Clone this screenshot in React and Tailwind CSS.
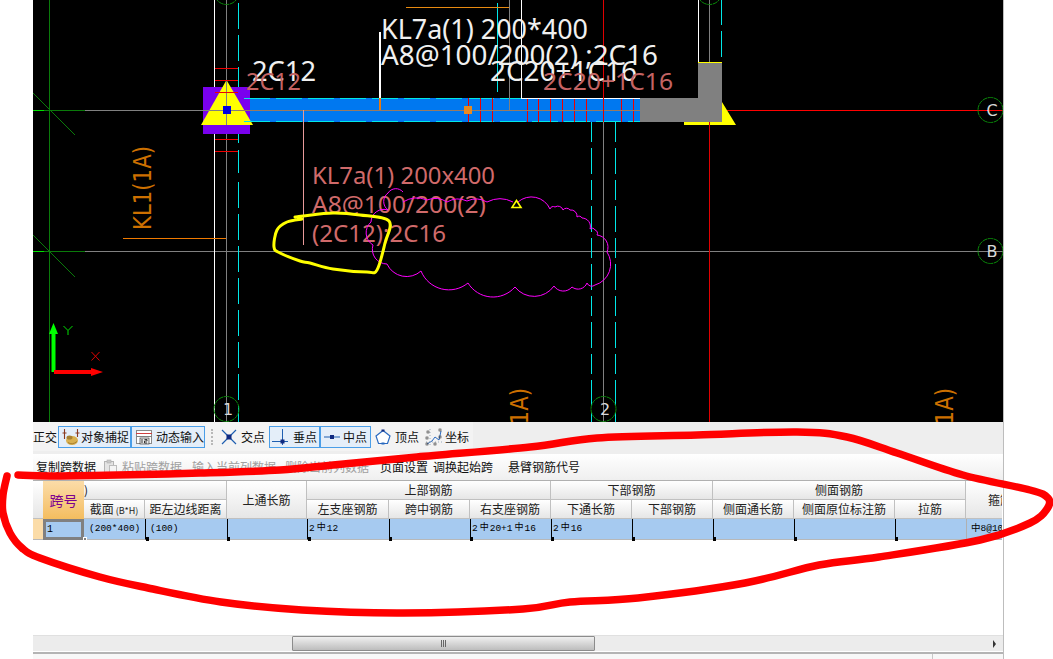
import React from "react";

const CJK = { fontFamily: '"Noto Sans CJK SC", sans-serif' };

function smooth(pts) {
  let d = `M${pts[0][0]} ${pts[0][1]}`;
  for (let i = 0; i < pts.length - 1; i++) {
    const p0 = pts[i - 1] || pts[i];
    const p1 = pts[i];
    const p2 = pts[i + 1];
    const p3 = pts[i + 2] || p2;
    const c1 = [p1[0] + (p2[0] - p0[0]) / 6, p1[1] + (p2[1] - p0[1]) / 6];
    const c2 = [p2[0] - (p3[0] - p1[0]) / 6, p2[1] - (p3[1] - p1[1]) / 6];
    d += ` C${c1[0]} ${c1[1]} ${c2[0]} ${c2[1]} ${p2[0]} ${p2[1]}`;
  }
  return d;
}

function scallop(pts, k = 0.62) {
  let d = `M${pts[0][0]} ${pts[0][1]}`;
  for (let i = 1; i < pts.length; i++) {
    const a = pts[i - 1];
    const b = pts[i];
    const r = Math.hypot(b[0] - a[0], b[1] - a[1]) * k;
    d += ` A${r} ${r} 0 0 1 ${b[0]} ${b[1]}`;
  }
  return d;
}

const redInk = [
  [7, 476], [3, 495], [3, 513], [10, 533], [22, 548], [40, 558], [100, 577], [148, 588], [221, 602], [302, 610],
  [403, 613], [523, 609], [570, 602], [638, 598], [745, 583], [819, 565], [879, 557], [980, 540], [1030, 523],
  [1047, 509], [1048, 498], [1030, 490], [963, 475], [897, 453], [847, 437], [797, 432], [697, 435], [597, 438],
  [530, 447], [417, 457], [333, 465], [280, 470], [200, 473], [117, 475], [50, 476], [18, 475],
];

const yellowInk = [
  [295, 217], [303, 216], [333, 213], [360, 215], [389, 221], [385, 243], [377, 270], [367, 272], [333, 269],
  [310, 263], [300, 261], [280, 253], [274, 247], [277, 230], [287, 222], [302, 219],
];

const cloud1 = [
  [550, 209], [555, 207], [563, 210], [570, 210], [577, 217], [582, 218], [590, 229], [595, 230], [597, 235],
  [607, 252], [595, 285], [587, 283], [572, 287], [554, 286], [515, 287], [468, 283], [421, 271], [387, 264],
  [373, 245], [371, 222], [388, 210], [388, 193], [403, 192],
];
const cloud2 = [[403, 202], [427, 200], [447, 202], [467, 201], [487, 202], [513, 202]];
const cloud3 = [[518, 202], [550, 209]];

const stirrups = [468, 480, 492, 527, 538, 550, 562, 574, 586, 603, 621, 633];

function AxisBubble({ cx, cy, label }) {
  return (
    <g>
      <circle cx={cx} cy={cy} r="12.5" fill="none" stroke="#0a8a0a" strokeDasharray="5 0.6" />
      <text x={cx + 1.5} y={cy + 6} textAnchor="middle" fontSize="16" fill="#d8d8d8" fontFamily="DejaVu Sans, sans-serif">
        {label}
      </text>
    </g>
  );
}

function CadCanvas() {
  const cadFont = "Noto Sans, sans-serif";
  return (
    <svg width="970" height="422" viewBox="33 0 970 422" className="block bg-black shrink-0">
      {/* left grid */}
      <line x1="49.5" y1="0" x2="49.5" y2="422" stroke="#0a7a0a" />
      <line x1="33" y1="93" x2="75" y2="135" stroke="#0a7a0a" />
      <line x1="33" y1="235" x2="75" y2="277" stroke="#0a7a0a" />
      <line x1="33" y1="110.5" x2="44" y2="110.5" stroke="#00e000" />
      <line x1="44" y1="110.5" x2="85" y2="110.5" stroke="#0a7a0a" />
      <line x1="85" y1="110.5" x2="722" y2="110.5" stroke="#808080" />
      <line x1="722" y1="110.5" x2="1003" y2="110.5" stroke="#ff0000" />
      <line x1="33" y1="251.5" x2="44" y2="251.5" stroke="#00e000" />
      <line x1="44" y1="251.5" x2="85" y2="251.5" stroke="#0a7a0a" />
      <line x1="85" y1="251.5" x2="1003" y2="251.5" stroke="#808080" />

      {/* axis 1 */}
      <line x1="214.5" y1="0" x2="214.5" y2="422" stroke="#ffffff" />
      <line x1="226.5" y1="0" x2="226.5" y2="422" stroke="#808080" />
      <line x1="238.5" y1="3" x2="238.5" y2="98" stroke="#00e8e8" strokeDasharray="26 6" />
      <line x1="238.5" y1="122" x2="238.5" y2="422" stroke="#00e8e8" strokeDasharray="21 7 23 9 26 6 26 6 26 6 26 6 26 6 26 6 26 6" />
      {[127, 139, 151].map((y) => (
        <line key={y} x1="215" y1={y + 0.5} x2="238" y2={y + 0.5} stroke="#f00000" />
      ))}

      {/* beam */}
      <rect x="238" y="98" width="402" height="24" fill="#0078f0" />
      <rect x="203" y="87" width="47" height="47" fill="#7a00ee" />
      <polygon points="226.5,80 253,125 201,125" fill="#ffff00" />
      <line x1="226.5" y1="80" x2="226.5" y2="125" stroke="#808080" />
      <line x1="201" y1="110.5" x2="253" y2="110.5" stroke="#808080" />
      <rect x="223" y="106" width="8" height="8" fill="#0000e0" />
      {[68, 80, 92].map((y) => (
        <line key={y} x1="215" y1={y + 0.5} x2="238" y2={y + 0.5} stroke="#f00000" />
      ))}
      <line x1="244" y1="98.5" x2="640" y2="98.5" stroke="#00e8e8" strokeDasharray="26 6" />
      <line x1="244" y1="121.5" x2="640" y2="121.5" stroke="#00e8e8" strokeDasharray="26 6" />
      {stirrups.map((x) => (
        <line key={x} x1={x + 0.5} y1="98" x2={x + 0.5} y2="122" stroke="#f00000" />
      ))}
      <line x1="238" y1="110.5" x2="640" y2="110.5" stroke="#9a7a60" />

      {/* column 2 */}
      <polygon points="722,102 736,125 684,125 722,120" fill="#ffff00" />
      <path d="M640 98H698V62H722V122H640Z" fill="#808080" />
      <line x1="698" y1="62.5" x2="722" y2="62.5" stroke="#ffff00" />
      <rect x="684" y="122" width="38" height="3" fill="#ffff00" />
      <line x1="521.5" y1="0" x2="521.5" y2="98" stroke="#fff" />
      <line x1="521" y1="98.5" x2="640" y2="98.5" stroke="#fff" />
      <line x1="640" y1="98.5" x2="698" y2="98.5" stroke="#808080" />
      <line x1="698.5" y1="0" x2="698.5" y2="62" stroke="#fff" />
      <line x1="709.5" y1="0" x2="709.5" y2="62" stroke="#808080" />
      <line x1="721.5" y1="0" x2="721.5" y2="57" stroke="#00e8e8" strokeDasharray="25 6 26 6" />
      <line x1="709.5" y1="122" x2="709.5" y2="422" stroke="#e00000" />
      <line x1="603.5" y1="0" x2="603.5" y2="122" stroke="#e00000" />
      <line x1="603.5" y1="122" x2="603.5" y2="422" stroke="#808080" />
      <line x1="591.5" y1="122" x2="591.5" y2="422" stroke="#00e8e8" strokeDasharray="20 6 26 6" />
      <line x1="615.5" y1="122" x2="615.5" y2="422" stroke="#00e8e8" strokeDasharray="20 6 26 6" />

      {/* other verticals */}
      <line x1="509.5" y1="0" x2="509.5" y2="110" stroke="#808080" />
      <line x1="497.5" y1="3" x2="497.5" y2="92" stroke="#00e8e8" />
      <line x1="406" y1="7.5" x2="509" y2="7.5" stroke="#e88a10" />
      <line x1="380" y1="32" x2="380" y2="98" stroke="#fff" strokeWidth="2" />
      <line x1="380" y1="98" x2="380" y2="110" stroke="#e87a10" strokeWidth="2" />
      <rect x="464" y="106" width="8" height="8" fill="#e88a20" />
      <line x1="303.5" y1="110" x2="303.5" y2="245" stroke="#e89a9a" />
      <line x1="123" y1="238.5" x2="226" y2="238.5" stroke="#f07a00" />

      {/* texts */}
      <g fontFamily={cadFont}>
        <text x="252" y="81" fontSize="28" fill="#f0f0f0" textLength="64" lengthAdjust="spacingAndGlyphs">2C12</text>
        <text x="246" y="90" fontSize="24" fill="#c46464" textLength="55" lengthAdjust="spacingAndGlyphs">2C12</text>
        <text x="381" y="39" fontSize="28" fill="#f0f0f0" textLength="207" lengthAdjust="spacingAndGlyphs">KL7a(1) 200*400</text>
        <text x="381" y="65" fontSize="28" fill="#f0f0f0" textLength="277" lengthAdjust="spacingAndGlyphs">A8@100/200(2) ;2C16</text>
        <text x="490" y="81" fontSize="28" fill="#f0f0f0" textLength="147" lengthAdjust="spacingAndGlyphs">2C20+1C16</text>
        <text x="543" y="90" fontSize="24" fill="#c46464" textLength="130" lengthAdjust="spacingAndGlyphs">2C20+1C16</text>
        <text x="312" y="184" fontSize="24" fill="#d06a6a" textLength="183" lengthAdjust="spacingAndGlyphs">KL7a(1) 200x400</text>
        <text x="312" y="213" fontSize="24" fill="#d06a6a" textLength="174" lengthAdjust="spacingAndGlyphs">A8@100/200(2)</text>
        <text x="312" y="242" fontSize="24" fill="#d06a6a" textLength="134" lengthAdjust="spacingAndGlyphs">(2C12);2C16</text>
      </g>
      <g fontFamily="DejaVu Sans, sans-serif" fontSize="24" fill="#cc7000">
        <text transform="translate(151 230) rotate(-90)" textLength="84" lengthAdjust="spacingAndGlyphs">KL1(1A)</text>
        <text transform="translate(528 472) rotate(-90)" textLength="84" lengthAdjust="spacingAndGlyphs">KL1(1A)</text>
        <text transform="translate(953 472) rotate(-90)" textLength="84" lengthAdjust="spacingAndGlyphs">KL1(1A)</text>
      </g>

      {/* cloud */}
      <path d={scallop(cloud1)} fill="none" stroke="#ff00ff" />
      <path d={scallop(cloud2, 1.1)} fill="none" stroke="#ff00ff" />
      <path d={scallop(cloud3)} fill="none" stroke="#ff00ff" />
      <polygon points="516.5,200.5 521,207.5 512,207.5" fill="none" stroke="#ffff00" strokeWidth="1.6" />

      {/* bubbles */}
      <AxisBubble cx={226.5} cy={-8} label="" />
      <AxisBubble cx={709.5} cy={-8} label="" />
      <AxisBubble cx={226.5} cy={409} label="1" />
      <AxisBubble cx={603.5} cy={409} label="2" />
      <AxisBubble cx={990.5} cy={110} label="C" />
      <AxisBubble cx={990.5} cy={251} label="B" />

      {/* ucs */}
      <line x1="53.5" y1="372" x2="53.5" y2="332" stroke="#00ff00" strokeWidth="4" />
      <polygon points="53.5,323 58,334 49,334" fill="#00ff00" />
      <line x1="54" y1="372" x2="92" y2="372" stroke="#ff0000" strokeWidth="4" />
      <polygon points="103,372 91,368 91,376" fill="#ff0000" />
      <path d="M63.5 326L68 330.5L72.5 326M68 330.5V335" fill="none" stroke="#00e000" />
      <path d="M91.5 352L99.5 360.5M99.5 352L91.5 360.5" fill="none" stroke="#e00000" />
    </svg>
  );
}

function ToolBtn({ active, children, className = "" }) {
  return (
    <div
      className={`flex items-center shrink-0 h-[22px] whitespace-nowrap ${
        active ? "border border-[#4a9ee8] bg-[#e4eef9]" : ""
      } ${className}`}
    >
      {children}
    </div>
  );
}

function MagnetIcon() {
  return (
    <svg width="18" height="18" viewBox="0 0 18 18" className="shrink-0">
      <path d="M2.5 1V11M15.5 1V9M0.5 5H4.5M13.5 5H17.5" stroke="#8a3a20" strokeWidth="1.1" />
      <ellipse cx="10" cy="12.5" rx="6" ry="4.5" fill="#d8b050" />
      <ellipse cx="7.5" cy="9.5" rx="3" ry="2" fill="#a88030" />
      <path d="M6 14.5Q10 17.5 15 13.5" stroke="#a88030" fill="none" />
    </svg>
  );
}

function InputIcon() {
  return (
    <svg width="18" height="16" viewBox="0 0 18 16" className="shrink-0">
      <rect x="1.5" y="1.5" width="15" height="13" fill="#fff" stroke="#8a8a8a" />
      <path d="M1 4.5H17" stroke="#d04040" />
      <path d="M1 7.5H17" stroke="#808080" />
      <rect x="5" y="9" width="9" height="6" fill="#e8e8e8" stroke="#222" strokeWidth="0.6" />
      <path d="M7 10V14M9.5 10.5H12V12H9.5V14H12" stroke="#111" strokeWidth="0.8" fill="none" />
    </svg>
  );
}

function CrossIcon() {
  return (
    <svg width="16" height="16" viewBox="0 0 16 16" className="shrink-0">
      <path d="M1 1L15 15M15 1L1 15" stroke="#1f5fb0" strokeWidth="1.2" />
      <rect x="5.5" y="5.5" width="5" height="5" fill="#102a80" />
    </svg>
  );
}

function PerpIcon() {
  return (
    <svg width="18" height="18" viewBox="0 0 18 18" className="shrink-0">
      <path d="M11.5 1V17" stroke="#1f5fb0" />
      <path d="M1 13.5H17" stroke="#1f5fb0" />
      <rect x="9.5" y="11.5" width="4" height="4" fill="#102a80" />
    </svg>
  );
}

function MidIcon() {
  return (
    <svg width="18" height="8" viewBox="0 0 18 8" className="shrink-0">
      <path d="M1 4H17" stroke="#1f5fb0" />
      <rect x="7" y="2" width="4" height="4" fill="#102a80" />
    </svg>
  );
}

function PentIcon() {
  return (
    <svg width="16" height="16" viewBox="0 0 16 16" className="shrink-0">
      <polygon points="8,1.5 15,7 12.5,14.5 3.5,14.5 1,7" fill="#fff" stroke="#2a6ac0" strokeWidth="1.2" />
      <rect x="6.5" y="0.5" width="3" height="2" fill="#102a80" />
      <rect x="6.5" y="13.5" width="3" height="2" fill="#2a6ac0" />
    </svg>
  );
}

function CoordIcon() {
  return (
    <svg width="18" height="18" viewBox="0 0 18 18" className="shrink-0">
      <path d="M2 16L7 13L10 9L14 12L16 3" fill="none" stroke="#2a6ac0" />
      <path d="M5 1V17M1 14H17" stroke="#9ab" strokeDasharray="1 2" />
      {[[2, 3], [14, 1], [1, 9], [1, 15], [9, 15], [14, 8]].map(([x, y]) => (
        <rect key={`${x}-${y}`} x={x} y={y} width="2" height="2" fill="none" stroke="#333" strokeWidth="0.6" />
      ))}
    </svg>
  );
}

function TopToolbar() {
  return (
    <div className="h-[32px] shrink-0 bg-[#eeeeee] flex items-start text-[12px] text-[#111]" style={CJK}>
      <div className="w-[440px] h-[29px] bg-[#f3f3f3] flex items-center">
        <span className="w-[25px] shrink-0 whitespace-nowrap overflow-hidden">正交</span>
        <ToolBtn active className="w-[73px] pl-[3px] gap-[1px]">
          <MagnetIcon />
          <span>对象捕捉</span>
        </ToolBtn>
        <ToolBtn active className="w-[74px] pl-[3px] gap-[3px]">
          <InputIcon />
          <span>动态输入</span>
        </ToolBtn>
        <div className="ml-[6px] h-[16px] shrink-0 border-l-2 border-dotted border-[#b8b8b8]" />
        <ToolBtn className="ml-[8px] w-[47px] gap-[4px]">
          <CrossIcon />
          <span>交点</span>
        </ToolBtn>
        <ToolBtn active className="ml-[1px] w-[51px] gap-[4px] pl-[1px]">
          <PerpIcon />
          <span>垂点</span>
        </ToolBtn>
        <ToolBtn active className="w-[51px] gap-[2px] pl-[2px]">
          <MidIcon />
          <span>中点</span>
        </ToolBtn>
        <ToolBtn className="ml-[4px] w-[48px] gap-[4px]">
          <PentIcon />
          <span>顶点</span>
        </ToolBtn>
        <ToolBtn className="ml-[2px] gap-[2px]">
          <CoordIcon />
          <span>坐标</span>
        </ToolBtn>
      </div>
    </div>
  );
}

function ClipIcon() {
  return (
    <svg width="15" height="15" viewBox="0 0 15 15" className="shrink-0 ml-[3px]">
      <rect x="1.5" y="2.5" width="9" height="11" fill="#e4e4e4" stroke="#b4b4b4" />
      <rect x="4" y="1" width="4" height="3" fill="#c8c8c8" stroke="#b0b0b0" strokeWidth="0.6" />
      <rect x="6.5" y="6.5" width="7" height="8" fill="#f4f4f4" stroke="#bcbcbc" />
    </svg>
  );
}

function SecondToolbar() {
  return (
    <div
      className="h-[26px] shrink-0 bg-gradient-to-b from-white to-[#efefef] flex items-center text-[12px] whitespace-nowrap pb-[1px]"
      style={CJK}
    >
      <span className="ml-[3px] w-[64px] text-[#111]">复制跨数据</span>
      <ClipIcon />
      <span className="ml-[4px] w-[70px] text-[#a0a0a0]">粘贴跨数据</span>
      <span className="w-[93px] text-[#a0a0a0]">输入当前列数据</span>
      <span className="w-[90px] text-[#a0a0a0]">删除当前列数据</span>
      <span className="ml-[5px] w-[53px] text-[#111]">页面设置</span>
      <span className="w-[75px] text-[#111]">调换起始跨</span>
      <span className="text-[#111]">悬臂钢筋代号</span>
    </div>
  );
}

const HD =
  "flex items-center justify-center bg-gradient-to-b from-white to-[#e6e6e6] border-r border-b border-[#c0c0c0] text-[12px] text-[#222] whitespace-nowrap overflow-hidden";

const subHeads = [
  ["col-start-3", "截面(B*H)"],
  ["col-start-4", "距左边线距离"],
  ["col-start-6", "左支座钢筋"],
  ["col-start-7", "跨中钢筋"],
  ["col-start-8", "右支座钢筋"],
  ["col-start-9", "下通长筋"],
  ["col-start-10", "下部钢筋"],
  ["col-start-11", "侧面通长筋"],
  ["col-start-12", "侧面原位标注筋"],
  ["col-start-13", "拉筋"],
];

const GRID = "grid grid-cols-[10px_41px_61px_82px_80px_82px_81px_81px_81px_81px_81px_101px_71px_36px]";
const MONO = { fontFamily: '"Liberation Mono", "Noto Sans CJK SC", monospace' };

function Bar() {
  return <span className="ml-[2px] mr-[1px] text-[9px]">中</span>;
}

function DataCell({ children, handle = true, pad = "pl-[1px]" }) {
  return (
    <div
      className={`relative bg-[#a6caf0] flex items-center ${pad} text-[9.5px] whitespace-nowrap overflow-hidden border-b border-[#b8b8b8] ${
        handle ? "border-l border-l-black" : ""
      }`}
      style={MONO}
    >
      {children}
    </div>
  );
}

function Handle({ x }) {
  return <div className="absolute top-[18px] w-[3px] h-[4px] bg-black" style={{ left: x }} />;
}

function Table() {
  return (
    <div className="shrink-0 border-t border-[#b0b0b0]" style={CJK}>
      <div className={`${GRID} grid-rows-[19px_19px]`}>
        <div className="col-start-1 row-start-1 row-span-2 bg-gradient-to-b from-white to-[#e6e6e6] border-b border-[#c0c0c0]" />
        <div className="col-start-2 row-start-1 row-span-2 flex items-center justify-center bg-gradient-to-b from-[#fbdca8] to-[#f4bd5e] text-[14px] text-[#7b0090]">
          跨号
        </div>
        <div className={`col-start-3 col-span-2 row-start-1 ${HD} !justify-start`}>)</div>
        <div className={`col-start-5 row-start-1 row-span-2 ${HD}`}>上通长筋</div>
        <div className={`col-start-6 col-span-3 row-start-1 ${HD}`}>上部钢筋</div>
        <div className={`col-start-9 col-span-2 row-start-1 ${HD}`}>下部钢筋</div>
        <div className={`col-start-11 col-span-3 row-start-1 ${HD}`}>侧面钢筋</div>
        <div className={`col-start-14 row-start-1 row-span-2 ${HD} !justify-start pl-[22px] !border-r-0`}>箍筋</div>
        {subHeads.map(([col, label]) => (
          <div key={label} className={`${col} row-start-2 ${HD}`}>
            {label === "截面(B*H)" ? (
              <span>
                截面<span className="text-[9px]"> (B*H)</span>
              </span>
            ) : (
              label
            )}
          </div>
        ))}
      </div>
      <div className={`${GRID} h-[20px] relative`}>
        <div className="bg-[#fbdca8] border-b border-[#b8b8b8]" />
        <div
          className="relative z-10 border-[3px] border-[#808080] bg-[#a6caf0] flex items-center text-[10px] pl-[1px] h-[21px]"
          style={MONO}
        >
          1
        </div>
        <DataCell handle={false} pad="pl-[5px]">(200*400)</DataCell>
        <DataCell pad="pl-[4px]">(100)</DataCell>
        <DataCell />
        <DataCell>2<Bar />12</DataCell>
        <DataCell />
        <DataCell>2<Bar />20+1<Bar />16</DataCell>
        <DataCell>2<Bar />16</DataCell>
        <DataCell />
        <DataCell />
        <DataCell />
        <DataCell />
        <div
          className="bg-[#a6caf0] border-l border-[#b0b0b0] border-b border-b-[#b8b8b8] flex items-center pl-[4px] text-[9.5px] whitespace-nowrap overflow-hidden"
          style={MONO}
        >
          中8@100
        </div>
        {[113, 194, 275, 356, 437, 518, 599, 680, 761, 862].map((x) => (
          <Handle key={x} x={x} />
        ))}
        <div className="absolute top-[18px] left-[50px] w-[4px] h-[4px] bg-[#808080] z-20 border border-white" />
      </div>
    </div>
  );
}

function ScrollBar() {
  return (
    <div className="h-[16px] shrink-0 bg-[#ececec] flex items-center border-t border-[#e0e0e0]">
      <div className="ml-[259px] w-[303px] h-[15px] border border-[#8c8c8c] rounded-[1px] bg-gradient-to-b from-[#f0f0f0] to-[#bdbdbd] flex items-center justify-center gap-[1px]">
        <span className="w-px h-[7px] bg-[#666]" />
        <span className="w-px h-[7px] bg-[#666]" />
        <span className="w-px h-[7px] bg-[#666]" />
      </div>
      <svg width="5" height="8" viewBox="0 0 5 8" className="ml-[397px]">
        <polygon points="1,0 4,4 1,8" fill="#333" />
      </svg>
    </div>
  );
}

function StatusBar() {
  return (
    <div className="mt-[1px] h-[7px] shrink-0 border-t-2 border-[#b4b4b4] bg-[#f8f8f8] flex">
      <div className="w-[900px] border-r border-[#c8c8c8]" />
    </div>
  );
}

export default function App() {
  return (
    <div className="relative w-[1053px] h-[659px] overflow-hidden bg-white flex">
      <div className="w-[33px] shrink-0" />
      <main className="w-[971px] h-[659px] shrink-0 flex flex-col border-r border-[#bdbdbd] overflow-hidden">
        <CadCanvas />
        <TopToolbar />
        <SecondToolbar />
        <Table />
        <div className="flex-1 bg-white" />
        <ScrollBar />
        <StatusBar />
      </main>
      <svg width="1053" height="659" viewBox="0 0 1053 659" className="absolute left-0 top-0 pointer-events-none">
        <path d={smooth(yellowInk)} fill="none" stroke="#ffff00" strokeWidth="3" strokeLinecap="round" />
        <path d={smooth(redInk)} fill="none" stroke="#ff0000" strokeWidth="7.5" strokeLinecap="round" />
      </svg>
    </div>
  );
}
